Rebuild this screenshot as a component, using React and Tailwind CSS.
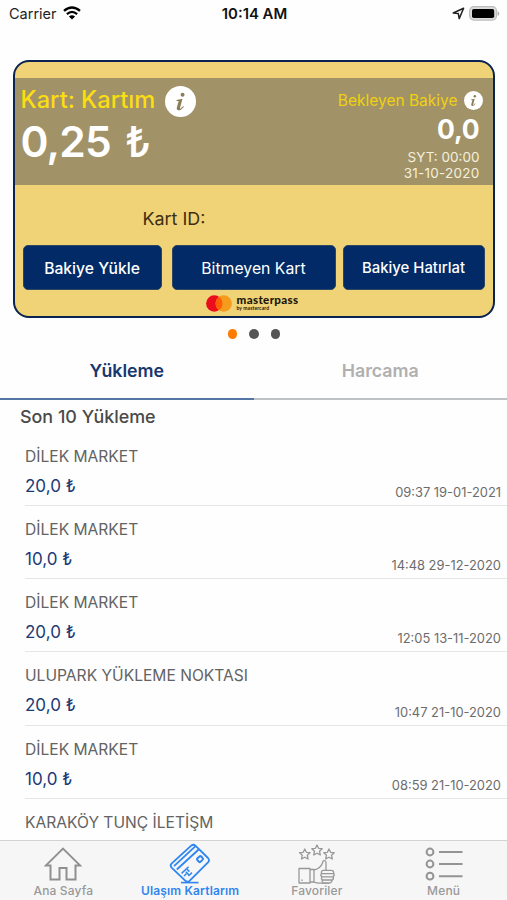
import React from 'react';
import clsx from 'clsx';

const transactions = [
    { place: 'DİLEK MARKET', amount: '20,0 ₺', date: '09:37 19-01-2021' },
    { place: 'DİLEK MARKET', amount: '10,0 ₺', date: '14:48 29-12-2020' },
    { place: 'DİLEK MARKET', amount: '20,0 ₺', date: '12:05 13-11-2020' },
    { place: 'ULUPARK YÜKLEME NOKTASI', amount: '20,0 ₺', date: '10:47 21-10-2020' },
    { place: 'DİLEK MARKET', amount: '10,0 ₺', date: '08:59 21-10-2020' },
    { place: 'KARAKÖY TUNÇ İLETİŞM' },
];

const WifiIcon = () => (
    <svg width="18" height="14" viewBox="0 0 18 14" fill="none" stroke="#000" strokeWidth="2.3">
        <path d="M1 4.9 Q9 -2 17 4.9" />
        <path d="M3.9 8.1 Q9 3.7 14.1 8.1" />
        <path d="M9 13.6 L5.9 10.5 Q9 8 12.1 10.5 Z" fill="#000" stroke="none" />
    </svg>
);

const LocationIcon = () => (
    <svg width="13" height="13" viewBox="0 0 13 13" fill="none" stroke="#222" strokeWidth="1.5" strokeLinejoin="round">
        <path d="M11.6 1.2 L1.2 6 L6.3 6.6 L7.2 11.6 Z" />
    </svg>
);

const BatteryIcon = () => (
    <svg width="31" height="15" viewBox="0 0 31 15">
        <rect x="0.7" y="0.7" width="26.8" height="13.4" rx="4" fill="#dcdcdc" stroke="#bdbdbd" strokeWidth="1.2" />
        <rect x="3" y="3" width="22.2" height="9" rx="1.8" fill="#000" />
        <path d="M28.6 5 Q30.4 6 30.4 7.5 Q30.4 9 28.6 10 Z" fill="#b0b0b0" />
    </svg>
);

const StatusBar = () => (
    <div className="grid grid-cols-3 items-center h-7 shrink-0 pl-[9px] pr-[7px] text-black">
        <div className="flex items-center gap-[6px] -mt-0.5">
            <span className="pt-0.5 text-[14.5px] text-[#222]">Carrier</span>
            <WifiIcon />
        </div>
        <span className="text-center text-[14.9px] font-semibold whitespace-nowrap text-[#111]">10:14 AM</span>
        <div className="flex items-center justify-end gap-1 -mt-0.5">
            <LocationIcon />
            <BatteryIcon />
        </div>
    </div>
);

const InfoBadge = ({ size }) => (
    <svg width={size} height={size} viewBox="0 0 30 30" className="shrink-0">
        <circle cx="15" cy="15" r="15" fill="#fff" />
        <circle cx="17" cy="8.4" r="1.9" fill="#8b7d55" />
        <path
            d="M11.2 13.6 L16.9 12.4 L14.5 21.2 Q14.3 22.4 15.4 21.6 L17.6 19.4 L18.2 20 Q15.4 23.6 13 23.5 Q10.9 23.3 11.5 20.8 L13.2 14.6 L11 14.4 Z"
            fill="#8b7d55"
        />
    </svg>
);

const MasterpassLogo = () => (
    <div className="flex items-center gap-[5px]">
        <svg width="26" height="17" viewBox="0 0 26 17">
            <circle cx="8.3" cy="8.5" r="8.2" fill="#eb0c1c" />
            <circle cx="17.7" cy="8.5" r="8.2" fill="#f59b1e" />
            <path d="M13 1.8 A8.2 8.2 0 0 1 13 15.2 A8.2 8.2 0 0 1 13 1.8 Z" fill="#fd5f05" />
        </svg>
        <div className="-mt-0.5 flex flex-col text-[#1f1708] font-[Lato,sans-serif]">
            <span className="text-[11.6px] leading-[10px] font-black tracking-[0.35px]">masterpass</span>
            <span className="text-[5px] leading-[6px] font-bold tracking-[0.1px]">by mastercard</span>
        </div>
    </div>
);

const CardButton = ({ className, children }) => (
    <button
        className={clsx(
            'h-[45px] pt-[2px] rounded-[5px] bg-[#012a66] border border-[#2c4663] text-white whitespace-nowrap',
            className
        )}
    >
        {children}
    </button>
);

const BalanceCard = () => (
    <div className="mx-auto mt-[32px] w-[482px] h-[258px] shrink-0 rounded-[16px] border-2 border-[#0a2350] bg-[#f0d377] overflow-hidden">
        {/* Balance strip */}
        <div className="mt-4 h-[107px] bg-[#a19367] flex justify-between pl-[6px] pr-[10px]">
            <div className="flex flex-col">
                <div className="mt-[8px] h-[31px] flex items-center gap-[10px]">
                    <span className="pb-[3px] text-[23.6px] leading-[28px] font-medium text-[#fbdd12]">Kart: Kartım</span>
                    <InfoBadge size={31} />
                </div>
                <span className="mt-[3px] text-[42.5px] leading-[44px] tracking-[-0.8px] font-semibold text-white">
                    0,25<span className="ml-[14px] font-medium">₺</span>
                </span>
            </div>
            <div className="flex flex-col items-end text-white">
                <div className="mt-[12px] h-5 flex items-center gap-[6px]">
                    <span className="pt-0.5 text-[15.5px] text-[#f0d010]">Bekleyen Bakiye</span>
                    <InfoBadge size={19} />
                </div>
                <div className="flex flex-col items-end pr-[3px]">
                    <span className="mt-[5px] text-[26.5px] leading-[28px] tracking-[-0.2px] font-bold">0,0</span>
                    <span className="mt-[6px] text-[13.5px] leading-4 text-[#f5efdc]">SYT: 00:00</span>
                    <span className="text-[13.5px] leading-4 tracking-[0.25px] text-[#f5efdc]">31-10-2020</span>
                </div>
            </div>
        </div>

        <p className="mt-[22px] pl-[128px] text-[17.9px] leading-6 text-[#3d2f12]">Kart ID:</p>
        <div className="mt-[14px] pl-2 flex">
            <CardButton className="w-[139px] text-[15.7px] font-medium">Bakiye Yükle</CardButton>
            <CardButton className="ml-[10px] w-[164px] text-[15.8px]">Bitmeyen Kart</CardButton>
            <CardButton className="ml-[7px] w-[142px] text-[14.9px] font-medium">Bakiye Hatırlat</CardButton>
        </div>
        <div className="mt-[5px] pl-[191px]">
            <MasterpassLogo />
        </div>
    </div>
);

const PageDots = () => (
    <div className="mt-[11px] shrink-0 flex justify-center gap-3 pl-px">
        <span className="size-[9.5px] rounded-full bg-[#ff7a00]" />
        <span className="size-[9.5px] rounded-full bg-[#555]" />
        <span className="size-[9.5px] rounded-full bg-[#555]" />
    </div>
);

const Tabs = () => (
    <div className="mt-[4px] shrink-0 grid grid-cols-2 text-center text-[17.8px] font-semibold">
        <div className="h-[57px] pt-[15px] border-b-2 border-[#5575a5] text-[#17376f]">Yükleme</div>
        <div className="h-[57px] pt-[15px] border-b-2 border-[#bfc2c4] text-[#b0b0b0]">Harcama</div>
    </div>
);

const TransactionRow = ({ item }) => (
    <li className="ml-[25px] h-[73.3px] shrink-0 border-b border-[#e6e6e6] flex justify-between">
        <div className="flex flex-col">
            <span className="mt-[13px] text-[15.6px] leading-[22px] text-[#636363]">{item.place}</span>
            {item.amount && (
                <span className="mt-[7px] text-[17px] leading-[22px] text-[#1c3a74]">{item.amount}</span>
            )}
        </div>
        {item.date && (
            <span className="self-end pr-[6px] pb-[3px] text-[12.9px] leading-[18px] text-[#6c6c6c]">{item.date}</span>
        )}
    </li>
);

const HomeIcon = () => (
    <svg width="38" height="34" viewBox="0 0 38 34" fill="none" stroke="#909090" strokeWidth="2" strokeLinejoin="miter">
        <path d="M19 1.6 L36 18.4 H31.5 V32.5 H22.5 V21 H15.5 V32.5 H6.5 V18.4 H2 Z" />
    </svg>
);

const CardsIcon = () => (
    <svg width="42" height="42" viewBox="0 0 42 42" fill="none" stroke="#2f86f0" strokeWidth="1.8" strokeLinejoin="round">
        <path d="M2.5 20.6 L22.2 2.6 Q24.5 0.8 26.6 2.8 L39 15 Q41 17.2 39 19.4 L20.5 37.8 Q18.3 39.8 16.2 37.6 L2.6 24.6 Q0.8 22.6 2.5 20.6 Z" />
        <path d="M5 23.2 L26.5 3.2 M7.8 26.5 L30.2 6" />
        <rect x="28.4" y="13.8" width="5.2" height="4.6" rx="1.2" transform="rotate(-42 31 16.1)" strokeWidth="2" />
        <path d="M12.6 30.4 L19.6 23.8 M15 33 L17.4 30.8 M18.2 26.4 L20.4 28.6 M19.4 33 L23 29.6 M16.8 28.8 L19.6 31.6" strokeWidth="1.5" />
        <path d="M12 39.6 H29.5" strokeWidth="1.6" />
    </svg>
);

const star = 'M0 -5.2 L1.6 -1.9 L5.2 -1.5 L2.5 1 L3.3 4.8 L0 3 L-3.3 4.8 L-2.5 1 L-5.2 -1.5 L-1.6 -1.9 Z';

const FavoritesIcon = () => (
    <svg width="38" height="40" viewBox="0 0 38 40" fill="none" stroke="#989898" strokeWidth="1.3" strokeLinejoin="round">
        <path d={star} transform="translate(6.8 10.2)" />
        <path d={star} transform="translate(19 6.2)" />
        <path d={star} transform="translate(31 10.2)" />
        <path d="M1 24.5 H12 V39 H1 Z M12 25.5 H16 V38 H12 M4 35.5 V37" />
        <path d="M16 26 Q22.5 24.5 24.5 19 L25 17 Q27.8 15.6 28 19 V26 M16 38 Q18 39.2 22 39.2 H31" />
        <path d="M25 26.4 H33 Q36 26.4 35.6 29 Q37 31 35.2 32.6 Q36 35 34.2 36 Q33.6 39.2 31 39.2 H26 Q23.5 38.4 24.4 36 Q22.8 34.6 23.8 32.8 Q22 31 23.6 29.4 Q22.8 27 25 26.4 Z M24 29.6 H35.5 M24 32.8 H35 M24.4 36 H34" />
    </svg>
);

const MenuIcon = () => (
    <svg width="38" height="34" viewBox="0 0 38 34" fill="none" stroke="#949494" strokeWidth="2">
        <circle cx="5" cy="5" r="3.4" />
        <circle cx="5" cy="17" r="3.4" />
        <circle cx="5" cy="29.2" r="3.4" />
        <path d="M14 5 H37.5 M14 17 H37.5 M14 29.2 H37.5" />
    </svg>
);

const NavItem = ({ icon, label, active }) => (
    <div className="flex flex-col items-center">
        <div className="h-[42px] flex items-center justify-center pt-[3px]">{icon}</div>
        <span
            className={clsx(
                'text-[12px] leading-[15px] whitespace-nowrap',
                active ? 'font-semibold tracking-[0.15px] text-[#2f86f0]' : 'font-medium tracking-[0.15px] text-[#999]'
            )}
        >
            {label}
        </span>
    </div>
);

const BottomNav = () => (
    <nav className="h-[60px] shrink-0 grid grid-cols-4 bg-[#f6f6f6] border-t border-[#d2d2d2]">
        <NavItem icon={<HomeIcon />} label="Ana Sayfa" />
        <NavItem icon={<CardsIcon />} label="Ulaşım Kartlarım" active />
        <NavItem icon={<FavoritesIcon />} label="Favoriler" />
        <NavItem icon={<MenuIcon />} label="Menü" />
    </nav>
);

const App = () => (
    <div className="w-[507px] h-[900px] flex flex-col overflow-hidden bg-[#fefefe] font-[Inter,sans-serif]">
        <div className="flex-1 min-h-0 flex flex-col overflow-hidden">
            <StatusBar />
            <BalanceCard />
            <PageDots />
            <Tabs />
            <h2 className="h-[33px] shrink-0 pl-[20px] pt-[4px] text-[17.9px] leading-[26px] font-medium text-[#4a4a4a]">
                Son 10 Yükleme
            </h2>
            <ul className="flex flex-col">
                {transactions.map((item, i) => (
                    <TransactionRow key={i} item={item} />
                ))}
            </ul>
        </div>
        <BottomNav />
    </div>
);

export default App;
